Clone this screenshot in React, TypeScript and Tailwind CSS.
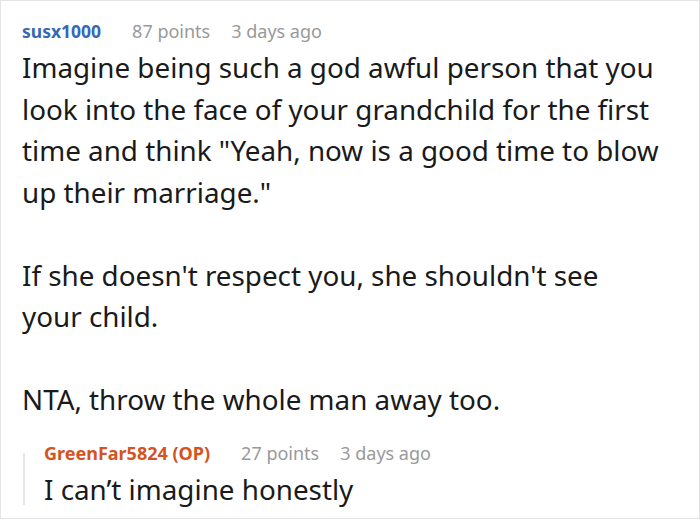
const body = "font-['Noto_Sans',sans-serif]";

function Meta({ name, points, age, nameClass }: { name: string; points: string; age: string; nameClass: string }) {
  return (
    <div className="flex items-center gap-[21px] text-[18px] leading-5">
      <span className={`font-bold ${nameClass}`}>{name}</span>
      <span className="text-[#999]">{points}</span>
      <span className="text-[#999]">{age}</span>
    </div>
  );
}

export default function App() {
  return (
    <div className={`${body} h-[519px] w-[700px] border border-[#e4e4e4] bg-white pl-[21px] pt-[20px] text-[#1a1a1a]`}>
      <Meta name="susx1000" points="87 points" age="3 days ago" nameClass="text-[#3668b5] text-[17.5px] mr-[10px]" />
      <div className="mt-[6px] pr-[40px] text-[27.8px] leading-[41.5px]">
        <p>Imagine being such a god awful person that you look into the face of your grandchild for the first time and think "Yeah, now is a good time to blow up their marriage."</p>
        <p className="mt-[41.5px]">If she doesn't respect you, she shouldn't see your child.</p>
        <p className="mt-[41.5px]">NTA, throw the whole man away too.</p>
      </div>
      <div className="mt-[22px] ml-[1px] flex">
        <div className="mt-[10px] w-[2px] bg-[#e6e6e6]" />
        <div className="pl-[19px]">
          <Meta name="GreenFar5824 (OP)" points="27 points" age="3 days ago" nameClass="text-[#d4531f] mr-[10px]" />
          <p className="mt-[10px] text-[27.8px] leading-[32px]">I can’t imagine honestly</p>
        </div>
      </div>
    </div>
  );
}
